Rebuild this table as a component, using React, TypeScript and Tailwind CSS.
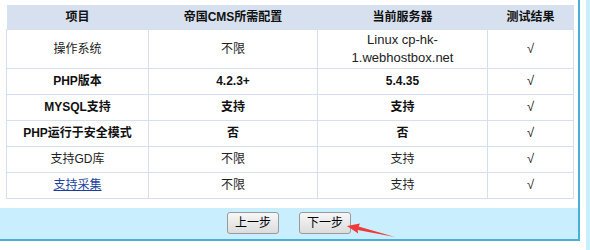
import clsx from "clsx";

type Row = {
  name: string;
  need: string;
  current: React.ReactNode;
  bold?: boolean;
  link?: boolean;
  tall?: boolean;
};

const rows: Row[] = [
  {
    name: "操作系统",
    need: "不限",
    current: (
      <span className="text-[13px]">
        Linux cp-hk-
        <br />
        1.webhostbox.net
      </span>
    ),
    tall: true,
  },
  { name: "PHP版本", need: "4.2.3+", current: "5.4.35", bold: true },
  { name: "MYSQL支持", need: "支持", current: "支持", bold: true },
  { name: "PHP运行于安全模式", need: "否", current: "否", bold: true },
  { name: "支持GD库", need: "不限", current: "支持" },
  { name: "支持采集", need: "不限", current: "支持", link: true },
];

function StepButton({ label }: { label: string }) {
  return (
    <button className="h-[22px] w-[52px] rounded-[3px] border border-[#9a9a9a] bg-gradient-to-b from-[#f7f7f7] to-[#dcdcdc] text-[12px] leading-[20px] text-black">
      {label}
    </button>
  );
}

export default function App() {
  const cell = "border border-[#d6dfef] text-center align-middle";

  return (
    <div
      className="flex h-[250px] w-[590px] bg-white text-[12px] text-[#222]"
      style={{ fontFamily: '"Liberation Sans", "Noto Sans CJK SC", sans-serif' }}
    >
      <div className="flex h-[241px] w-[580px] flex-col border-r-2 border-b-2 border-[#4aaedb]">
        <div className="pl-[6px] pt-[5px]">
          <table className="w-[567px] table-fixed border-collapse">
            <colgroup>
              <col className="w-[142px]" />
              <col className="w-[169px]" />
              <col className="w-[170px]" />
              <col className="w-[86px]" />
            </colgroup>
            <thead>
              <tr className="h-[24px] bg-[#d6e0ef] font-bold text-[#111]">
                <th>项目</th>
                <th>帝国CMS所需配置</th>
                <th>当前服务器</th>
                <th>测试结果</th>
              </tr>
            </thead>
            <tbody>
              {rows.map((row) => (
                <tr
                  key={row.name}
                  className={clsx(
                    row.tall ? "h-[39px]" : "h-[26px]",
                    row.bold && "font-bold text-[#111]"
                  )}
                >
                  <td className={cell}>
                    {row.link ? (
                      <a href="#" className="text-[#1c3f9e] underline">
                        {row.name}
                      </a>
                    ) : (
                      row.name
                    )}
                  </td>
                  <td className={cell}>{row.need}</td>
                  <td className={clsx(cell, "leading-[17px]")}>{row.current}</td>
                  <td className={clsx(cell, "font-normal text-[13px]")}>√</td>
                </tr>
              ))}
            </tbody>
          </table>
        </div>
        <div className="relative mt-[9px] flex flex-1 items-center justify-center gap-[20px] bg-[#c9efff]">
          <StepButton label="上一步" />
          <StepButton label="下一步" />
          <svg
            className="absolute left-[340px] top-0"
            width="60"
            height="34"
            viewBox="0 0 60 34"
          >
            <polygon points="7,18 20,15.6 18.6,18.6 55,29 17.6,22 18.2,25.4" fill="#f0393b" />
          </svg>
        </div>
      </div>
      <div className="ml-[6px] flex-1 bg-[#c9efff]" />
    </div>
  );
}
